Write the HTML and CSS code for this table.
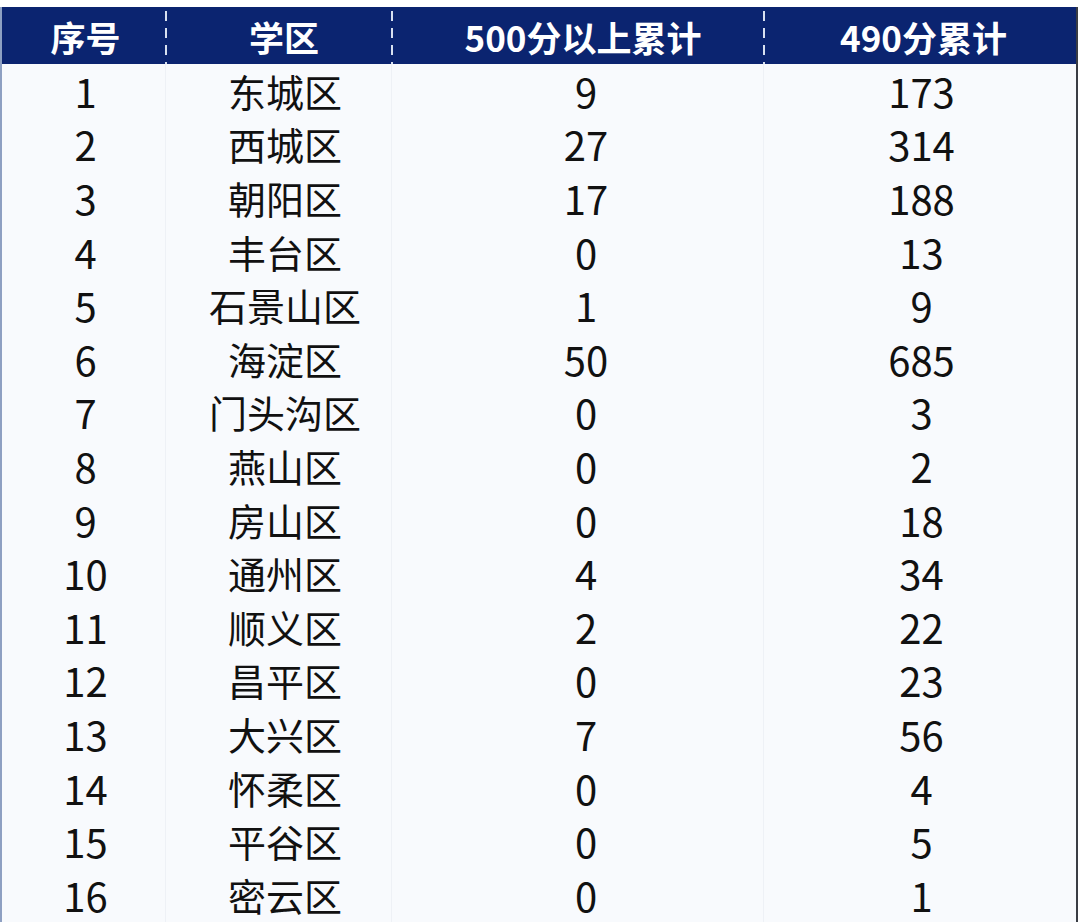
FILE: index.html
```html
<!DOCTYPE html>
<html lang="zh-CN">
<head>
<meta charset="utf-8">
<title>学区统计</title>
<link rel="stylesheet" href="styles.css">
</head>
<body>
<div class="sheet">
  <div class="table">
    <div class="row head">
      <div class="cell">序号</div>
      <div class="cell sep">学区</div>
      <div class="cell sep">500分以上累计</div>
      <div class="cell sep">490分累计</div>
    </div>
    <div class="row"><div class="cell">1</div><div class="cell sep">东城区</div><div class="cell sep">9</div><div class="cell sep">173</div></div>
    <div class="row"><div class="cell">2</div><div class="cell sep">西城区</div><div class="cell sep">27</div><div class="cell sep">314</div></div>
    <div class="row"><div class="cell">3</div><div class="cell sep">朝阳区</div><div class="cell sep">17</div><div class="cell sep">188</div></div>
    <div class="row"><div class="cell">4</div><div class="cell sep">丰台区</div><div class="cell sep">0</div><div class="cell sep">13</div></div>
    <div class="row"><div class="cell">5</div><div class="cell sep">石景山区</div><div class="cell sep">1</div><div class="cell sep">9</div></div>
    <div class="row"><div class="cell">6</div><div class="cell sep">海淀区</div><div class="cell sep">50</div><div class="cell sep">685</div></div>
    <div class="row"><div class="cell">7</div><div class="cell sep">门头沟区</div><div class="cell sep">0</div><div class="cell sep">3</div></div>
    <div class="row"><div class="cell">8</div><div class="cell sep">燕山区</div><div class="cell sep">0</div><div class="cell sep">2</div></div>
    <div class="row"><div class="cell">9</div><div class="cell sep">房山区</div><div class="cell sep">0</div><div class="cell sep">18</div></div>
    <div class="row"><div class="cell">10</div><div class="cell sep">通州区</div><div class="cell sep">4</div><div class="cell sep">34</div></div>
    <div class="row"><div class="cell">11</div><div class="cell sep">顺义区</div><div class="cell sep">2</div><div class="cell sep">22</div></div>
    <div class="row"><div class="cell">12</div><div class="cell sep">昌平区</div><div class="cell sep">0</div><div class="cell sep">23</div></div>
    <div class="row"><div class="cell">13</div><div class="cell sep">大兴区</div><div class="cell sep">7</div><div class="cell sep">56</div></div>
    <div class="row"><div class="cell">14</div><div class="cell sep">怀柔区</div><div class="cell sep">0</div><div class="cell sep">4</div></div>
    <div class="row"><div class="cell">15</div><div class="cell sep">平谷区</div><div class="cell sep">0</div><div class="cell sep">5</div></div>
    <div class="row"><div class="cell">16</div><div class="cell sep">密云区</div><div class="cell sep">0</div><div class="cell sep">1</div></div>
  </div>
</div>
</body>
</html>
```

FILE: styles.css
```css
html, body {
  margin: 0;
  padding: 0;
  background: #ffffff;
}
body {
  width: 1080px;
  height: 922px;
  overflow: hidden;
  font-family: "Noto Sans CJK SC", "Noto Sans", sans-serif;
}
.sheet {
  padding-top: 7px;
  height: 915px;
  box-sizing: border-box;
}
.table {
  width: 1078px;
  height: 915px;
  box-sizing: border-box;
  border-left: 2px solid #8ea0c2;
  border-right: 2px solid #3a3d44;
  background: #f8fafd;
}
.row {
  display: grid;
  grid-template-columns: 163px 226px 372px 313px;
  height: 53.6px;
  align-items: stretch;
}
.cell {
  display: flex;
  align-items: center;
  justify-content: center;
  font-size: 40px;
  color: #111111;
  line-height: 1;
  box-sizing: border-box;
}
.row .cell.sep {
  background-image: linear-gradient(to bottom, #eef1f6, #eef1f6);
  background-size: 1px 100%;
  background-repeat: no-repeat;
  background-position: left top;
}
.row.head {
  height: 57px;
  background: #0b2470;
}
.head .cell {
  color: #ffffff;
  font-weight: 700;
  font-size: 35px;
  padding-top: 2px;
}
.head .cell.sep {
  background-image: repeating-linear-gradient(to bottom, #d8e0f0 0 10px, transparent 10px 17px);
  background-size: 2px 100%;
  background-position: left 4px;
}
.row .cell:nth-child(1) { padding-left: 4px; }
.row .cell:nth-child(2) { padding-left: 14px; font-size: 38px; }
.row .cell:nth-child(3) { padding-left: 18px; }
.row .cell:nth-child(4) { padding-left: 4px; }
.head .cell:nth-child(1) { padding-left: 4px; }
.head .cell:nth-child(2) { padding-left: 12px; font-size: 35px; }
.head .cell:nth-child(3) { padding-left: 12px; }
.head .cell:nth-child(4) { padding-left: 8px; }
```
